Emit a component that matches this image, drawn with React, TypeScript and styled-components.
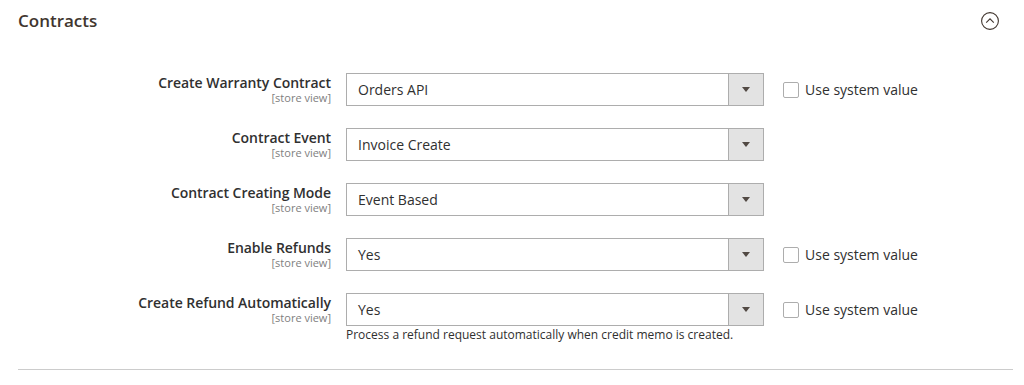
import React from 'react';
import styled, { createGlobalStyle } from 'styled-components';

const GlobalStyle = createGlobalStyle`
  body {
    margin: 0;
    background: #ffffff;
    font-family: 'Open Sans', 'Liberation Sans', sans-serif;
    color: #303030;
  }
`;

type Field = {
  label: string;
  value: string;
  systemValue?: boolean;
  note?: string;
};

const fields: Field[] = [
  { label: 'Create Warranty Contract', value: 'Orders API', systemValue: true },
  { label: 'Contract Event', value: 'Invoice Create' },
  { label: 'Contract Creating Mode', value: 'Event Based' },
  { label: 'Enable Refunds', value: 'Yes', systemValue: true },
  {
    label: 'Create Refund Automatically',
    value: 'Yes',
    systemValue: true,
    note: 'Process a refund request automatically when credit memo is created.',
  },
];

const App: React.FC = () => {
  return (
    <>
      <GlobalStyle />
      <Section>
        <Header>
          <Title>Contracts</Title>
          <CollapseIcon width="20" height="20" viewBox="0 0 20 20">
            <circle cx="10" cy="10" r="8.4" fill="none" stroke="#41362f" strokeWidth="1.1" />
            <path d="M6.2 11.6 L10 7.8 L13.8 11.6" fill="none" stroke="#41362f" strokeWidth="1.1" />
          </CollapseIcon>
        </Header>
        <Fieldset>
          {fields.map((f) => (
            <Row key={f.label}>
              <LabelCell>
                <LabelText>{f.label}</LabelText>
                <Scope>[store view]</Scope>
              </LabelCell>
              <ControlCell>
                <Select>
                  <SelectValue>{f.value}</SelectValue>
                  <ArrowBox>
                    <Arrow />
                  </ArrowBox>
                </Select>
                {f.note && <Note>{f.note}</Note>}
              </ControlCell>
              <UseCell>
                {f.systemValue && (
                  <CheckLabel>
                    <CheckBox />
                    Use system value
                  </CheckLabel>
                )}
              </UseCell>
            </Row>
          ))}
        </Fieldset>
        <Divider />
      </Section>
    </>
  );
};

const Section = styled.div`
  padding: 0 11px 0 18px;
`;

const Header = styled.div`
  display: flex;
  align-items: center;
  justify-content: space-between;
  height: 41px;
  padding-right: 13px;
`;

const Title = styled.h2`
  margin: 0;
  font-size: 17px;
  font-weight: 600;
  color: #41362f;
`;

const CollapseIcon = styled.svg`
  display: block;
  margin-top: 1px;
`;

const Fieldset = styled.div`
  display: flex;
  flex-direction: column;
  gap: 22px;
  padding-top: 32px;
`;

const Row = styled.div`
  display: grid;
  grid-template-columns: 313px 418px 1fr;
  column-gap: 15px;
`;

const LabelCell = styled.div`
  display: flex;
  flex-direction: column;
  align-items: flex-end;
  text-align: right;
`;

const LabelText = styled.span`
  font-size: 14px;
  font-weight: 600;
  line-height: 19px;
  letter-spacing: -0.05px;
  color: #303030;
`;

const Scope = styled.span`
  font-size: 11px;
  line-height: 12px;
  color: #808080;
`;

const ControlCell = styled.div`
  display: flex;
  flex-direction: column;
`;

const Select = styled.div`
  display: flex;
  height: 33px;
  box-sizing: border-box;
  border: 1px solid #adadad;
  background: #ffffff;
`;

const SelectValue = styled.div`
  flex: 1;
  display: flex;
  align-items: center;
  padding-left: 11px;
  font-size: 14px;
  color: #303030;
`;

const ArrowBox = styled.div`
  width: 34px;
  display: flex;
  align-items: center;
  justify-content: center;
  background: #e3e3e3;
  border-left: 1px solid #adadad;
`;

const Arrow = styled.div`
  width: 0;
  height: 0;
  border-left: 4px solid transparent;
  border-right: 4px solid transparent;
  border-top: 5px solid #514943;
`;

const Note = styled.div`
  margin-top: 1px;
  font-size: 12px;
  line-height: 16px;
  color: #303030;
`;

const UseCell = styled.div`
  display: flex;
  align-items: flex-start;
  padding-left: 4px;
  height: 33px;
`;

const CheckLabel = styled.label`
  display: flex;
  align-items: center;
  gap: 6px;
  height: 33px;
  font-size: 14px;
  color: #303030;
`;

const CheckBox = styled.span`
  display: inline-block;
  width: 16px;
  height: 16px;
  box-sizing: border-box;
  border: 1px solid #adadad;
  border-radius: 2px;
  background: #ffffff;
`;

const Divider = styled.div`
  margin-top: 26px;
  height: 1px;
  background: #cccccc;
`;

export default App;
